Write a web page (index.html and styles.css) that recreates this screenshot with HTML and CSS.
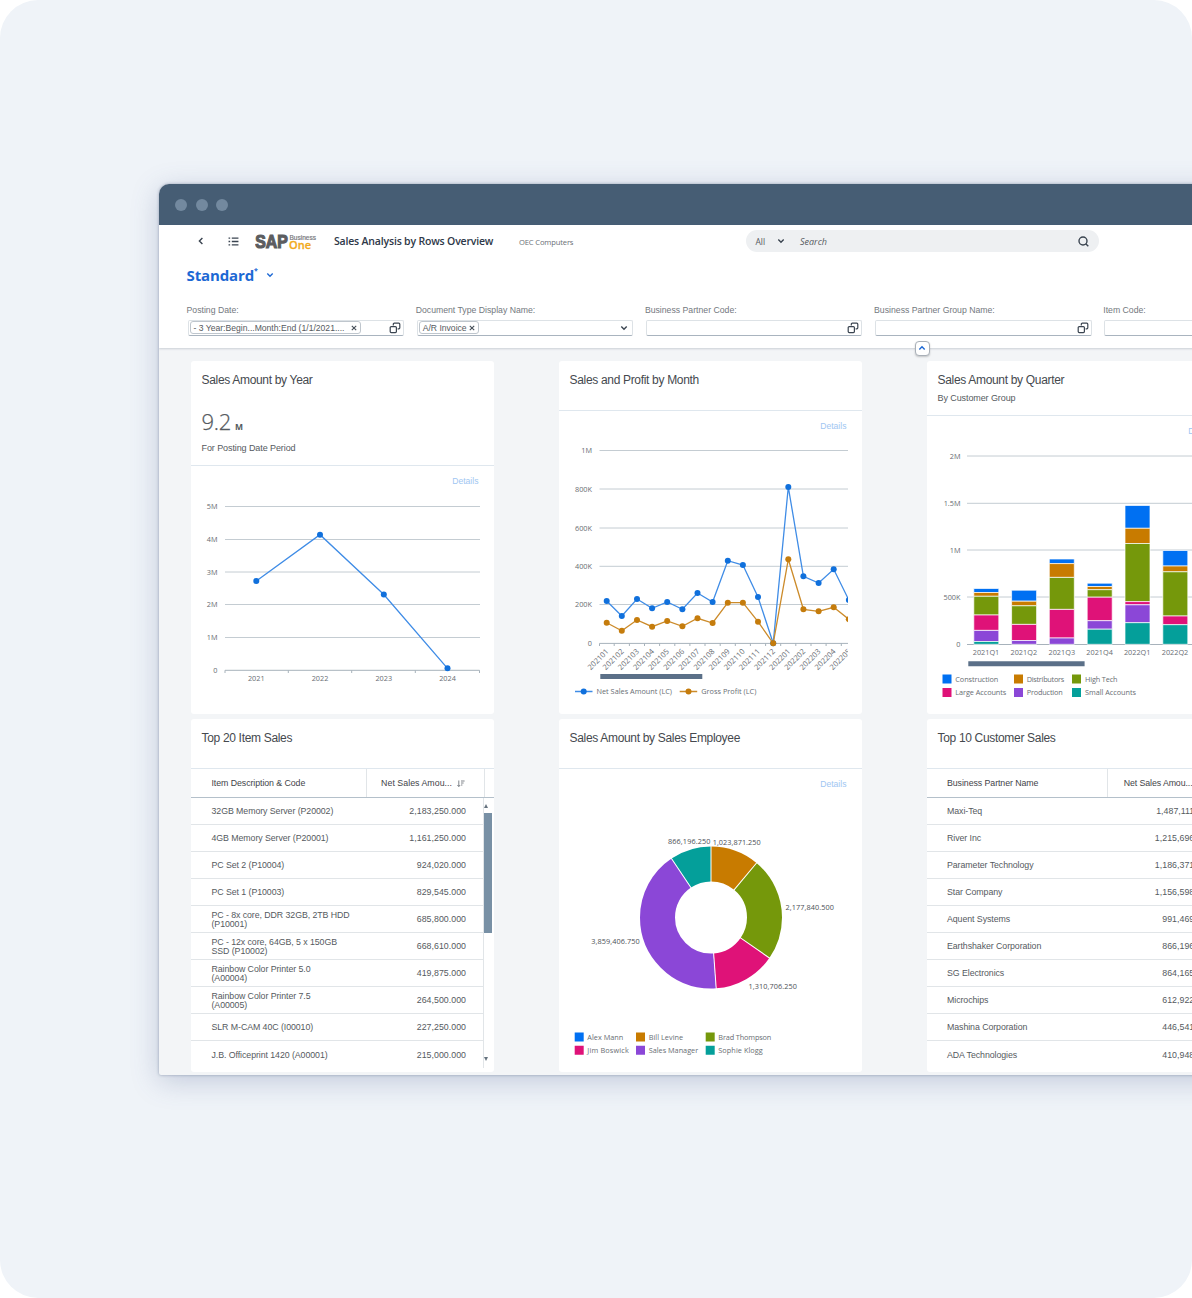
FILE: index.html
```html
<!DOCTYPE html>
<html lang="en">
<head>
<meta charset="utf-8">
<title>Sales Analysis by Rows Overview</title>
<link rel="stylesheet" href="styles.css">
</head>
<body>
<svg width="0" height="0" class="defs">
  <symbol id="value-help" viewBox="0 0 12 12"><path d="M4.3 3.6V2.2a1 1 0 0 1 1-1h4.5a1 1 0 0 1 1 1v3.6a1 1 0 0 1-1 1H8.6M2.2 4.6h4.2a1 1 0 0 1 1 1v4a1 1 0 0 1-1 1H2.2a1 1 0 0 1-1-1v-4a1 1 0 0 1 1-1z"/></symbol>
  <symbol id="chevron" viewBox="0 0 8 6"><path d="M1.3 1.5 4 4.2l2.7-2.7"/></symbol>
</svg>
<div class="stage">
<main class="window">
  <div class="titlebar"><i></i><i></i><i></i></div>
  <header class="header">
    <div class="shell">
      <svg class="icon back" viewBox="0 0 6 8"><path d="M4.4 1 1.4 4l3 3"/></svg>
      <svg class="icon menu" viewBox="0 0 11 10"><path d="M0 1.2h1.8M0 5h1.8M0 8.8h1.8M3.6 1.2H11M3.6 5H11M3.6 8.8H11"/></svg>
      <svg class="logo" viewBox="255 231 62 20">
        <text class="sap" x="255.3" y="248.3" textLength="32.5" lengthAdjust="spacingAndGlyphs">SAP</text>
        <text class="business" x="289.5" y="239.8" textLength="26.5" lengthAdjust="spacingAndGlyphs">Business</text>
        <text class="one" x="289" y="248.6" textLength="22" lengthAdjust="spacingAndGlyphs">One</text>
      </svg>
      <h1>Sales Analysis by Rows Overview</h1>
      <span class="company">OEC Computers</span>
      <div class="search">
        <span class="scope">All</span>
        <svg class="icon chev" ><use href="#chevron"/></svg>
        <span class="placeholder">Search</span>
        <svg class="icon lens" viewBox="0 0 11 11"><circle cx="5" cy="5" r="4"/><path d="m7.7 7.7 2.6 2.6"/></svg>
      </div>
    </div>
    <div class="variant"><span>Standard</span><sup>*</sup><svg class="icon chev"><use href="#chevron"/></svg></div>
    <div class="filters">
      <div class="filter"><label>Posting Date:</label><div class="input"><span class="token long"><b>- 3 Year:Begin...Month:End (1/1/2021....</b><svg class="x" viewBox="0 0 6 6"><path d="m.8.8 4.4 4.4m0-4.4L.8 5.2"/></svg></span><svg class="icon help"><use href="#value-help"/></svg></div></div>
      <div class="filter"><label>Document Type Display Name:</label><div class="input"><span class="token"><b>A/R Invoice</b><svg class="x" viewBox="0 0 6 6"><path d="m.8.8 4.4 4.4m0-4.4L.8 5.2"/></svg></span><svg class="icon chev"><use href="#chevron"/></svg></div></div>
      <div class="filter"><label>Business Partner Code:</label><div class="input"><svg class="icon help"><use href="#value-help"/></svg></div></div>
      <div class="filter"><label>Business Partner Group Name:</label><div class="input"><svg class="icon help"><use href="#value-help"/></svg></div></div>
      <div class="filter"><label>Item Code:</label><div class="input"></div></div>
    </div>
    <div class="collapse"><svg class="icon"><use href="#chevron"/></svg></div>
  </header>

  <div class="cards">
    <section class="card">
      <div class="head kpi"><h2>Sales Amount by Year</h2><div class="number">9.2<small>M</small></div><p>For Posting Date Period</p></div>
      <a class="details">Details</a>
      <svg class="chart" width="303" height="217" viewBox="191 496 303 217">
        <path class="grid" d="M225 506.5h255M225 539.5h255M225 572h255M225 604.5h255M225 637.5h255"/>
        <path class="axis" d="M225 673v-2.7h254.5v2.7M288.3 670.3v2.7M351.7 670.3v2.7M415.3 670.3v2.7"/>
        <g class="end"><text x="217.5" y="509">5M</text><text x="217.5" y="542">4M</text><text x="217.5" y="575">3M</text><text x="217.5" y="607">2M</text><text x="217.5" y="640">1M</text><text x="217.5" y="673">0</text></g>
        <g class="mid"><text x="256.3" y="681">2021</text><text x="320" y="681">2022</text><text x="383.8" y="681">2023</text><text x="447.5" y="681">2024</text></g>
        <polyline class="line blue" points="256.3,581 320,534.7 383.8,594.5 447.5,668.3"/>
        <g class="dots blue"><circle cx="256.3" cy="581" r="3"/><circle cx="320" cy="534.7" r="3"/><circle cx="383.8" cy="594.5" r="3"/><circle cx="447.5" cy="668.3" r="3"/></g>
      </svg>
    </section>

    <section class="card">
      <div class="head"><h2>Sales and Profit by Month</h2></div>
      <a class="details">Details</a>
      <svg class="chart" width="303" height="272" viewBox="559 441 303 272">
        <defs><clipPath id="plot"><path d="M570 441h278v240H570z"/></clipPath></defs>
        <path class="grid" d="M599.5 450.5H848M599.5 489H848M599.5 528H848M599.5 566.3H848M599.5 604.5H848"/>
        <path class="axis" d="M599.5 646v-2.6H848M614.2 643.4v2.6M629.4 643.4v2.6M644.5 643.4v2.6M659.6 643.4v2.6M674.8 643.4v2.6M689.9 643.4v2.6M705 643.4v2.6M720.2 643.4v2.6M735.3 643.4v2.6M750.4 643.4v2.6M765.6 643.4v2.6M780.7 643.4v2.6M795.8 643.4v2.6M811 643.4v2.6M826.1 643.4v2.6M841.3 643.4v2.6"/>
        <g class="end"><text x="592" y="453">1M</text><text x="592" y="491.6">800K</text><text x="592" y="530.5">600K</text><text x="592" y="569">400K</text><text x="592" y="607">200K</text><text x="592" y="646">0</text></g>
        <g clip-path="url(#plot)">
          <g class="end slant">
            <text transform="translate(609.2 652) rotate(-45)">202101</text><text transform="translate(624.3 652) rotate(-45)">202102</text><text transform="translate(639.5 652) rotate(-45)">202103</text><text transform="translate(654.6 652) rotate(-45)">202104</text><text transform="translate(669.7 652) rotate(-45)">202105</text><text transform="translate(684.9 652) rotate(-45)">202106</text><text transform="translate(700 652) rotate(-45)">202107</text><text transform="translate(715.1 652) rotate(-45)">202108</text><text transform="translate(730.3 652) rotate(-45)">202109</text><text transform="translate(745.4 652) rotate(-45)">202110</text><text transform="translate(760.5 652) rotate(-45)">202111</text><text transform="translate(775.7 652) rotate(-45)">202112</text><text transform="translate(790.8 652) rotate(-45)">202201</text><text transform="translate(805.9 652) rotate(-45)">202202</text><text transform="translate(821.1 652) rotate(-45)">202203</text><text transform="translate(836.2 652) rotate(-45)">202204</text><text transform="translate(851.3 652) rotate(-45)">202205</text>
          </g>
          <polyline class="line blue" points="606.7,601 621.8,616 637,599 652.1,608.3 667.2,602 682.4,609.3 697.5,593 712.6,602 727.8,560.7 742.9,565 758,597 773.2,643.3 788.3,487 803.4,576.3 818.6,583 833.7,569.3 848.8,600"/>
          <g class="dots blue"><circle cx="606.7" cy="601" r="3"/><circle cx="621.8" cy="616" r="3"/><circle cx="637" cy="599" r="3"/><circle cx="652.1" cy="608.3" r="3"/><circle cx="667.2" cy="602" r="3"/><circle cx="682.4" cy="609.3" r="3"/><circle cx="697.5" cy="593" r="3"/><circle cx="712.6" cy="602" r="3"/><circle cx="727.8" cy="560.7" r="3"/><circle cx="742.9" cy="565" r="3"/><circle cx="758" cy="597" r="3"/><circle cx="773.2" cy="643.3" r="3"/><circle cx="788.3" cy="487" r="3"/><circle cx="803.4" cy="576.3" r="3"/><circle cx="818.6" cy="583" r="3"/><circle cx="833.7" cy="569.3" r="3"/><circle cx="848.8" cy="600" r="3"/></g>
          <polyline class="line gold" points="606.7,622.7 621.8,630.7 637,620 652.1,626.7 667.2,621 682.4,626.3 697.5,618.3 712.6,623 727.8,602.7 742.9,602.7 758,621.7 773.2,643.3 788.3,559.3 803.4,609.3 818.6,611.3 833.7,607.3 848.8,619.3"/>
          <g class="dots gold"><circle cx="606.7" cy="622.7" r="3"/><circle cx="621.8" cy="630.7" r="3"/><circle cx="637" cy="620" r="3"/><circle cx="652.1" cy="626.7" r="3"/><circle cx="667.2" cy="621" r="3"/><circle cx="682.4" cy="626.3" r="3"/><circle cx="697.5" cy="618.3" r="3"/><circle cx="712.6" cy="623" r="3"/><circle cx="727.8" cy="602.7" r="3"/><circle cx="742.9" cy="602.7" r="3"/><circle cx="758" cy="621.7" r="3"/><circle cx="773.2" cy="643.3" r="3"/><circle cx="788.3" cy="559.3" r="3"/><circle cx="803.4" cy="609.3" r="3"/><circle cx="818.6" cy="611.3" r="3"/><circle cx="833.7" cy="607.3" r="3"/><circle cx="848.8" cy="619.3" r="3"/></g>
        </g>
        <path class="scroll" d="M600.3 674h102v5h-102z"/>
        <path class="line blue" d="M575 691.5h17.5"/><g class="dots blue"><circle cx="583.7" cy="691.5" r="3"/></g>
        <text x="596.5" y="694.3" textLength="75.5">Net Sales Amount (LC)</text>
        <path class="line gold" d="M679.7 691.5h17.5"/><g class="dots gold"><circle cx="688.5" cy="691.5" r="3"/></g>
        <text x="701.3" y="694.3" textLength="55">Gross Profit (LC)</text>
      </svg>
    </section>

    <section class="card">
      <div class="head sub"><h2>Sales Amount by Quarter</h2><p>By Customer Group</p></div>
      <a class="details">Details</a>
      <svg class="chart" width="303" height="267" viewBox="927 446 303 267">
        <path class="grid" d="M967 456h249M967 503.3h249M967 550h249M967 597h249"/>
        <path class="axis" d="M967 644.5h249"/>
        <g class="end"><text x="960.5" y="458.5">2M</text><text x="960.5" y="506">1.5M</text><text x="960.5" y="553">1M</text><text x="960.5" y="599.5">500K</text><text x="960.5" y="647">0</text></g>
        <g class="bars">
          <path class="c1" d="M973.8 588.5h25v4h-25zM1011.6 590.2h25v11h-25zM1049.3 559h25v4.6h-25zM1087.2 583.2h25v3.3h-25zM1125 505.5h25v22.8h-25zM1162.8 550.5h25v15.5h-25z"/>
          <path class="c2" d="M973.8 592.5h25v3.8h-25zM1011.6 601.2h25v4.6h-25zM1049.3 563.6h25v13.8h-25zM1087.2 586.5h25v3.2h-25zM1125 528.3h25v15.2h-25zM1162.8 566h25v5.8h-25z"/>
          <path class="c3" d="M973.8 596.3h25v18.7h-25zM1011.6 605.8h25v18.6h-25zM1049.3 577.4h25v32h-25zM1087.2 589.7h25v7.5h-25zM1125 543.5h25v58.1h-25zM1162.8 571.8h25v44.2h-25z"/>
          <path class="c4" d="M973.8 615h25v15.4h-25zM1011.6 624.4h25v16.1h-25zM1049.3 609.4h25v28.6h-25zM1087.2 597.2h25v23.5h-25zM1125 601.6h25v3.2h-25zM1162.8 616h25v8.7h-25z"/>
          <path class="c5" d="M973.8 630.4h25v11.1h-25zM1011.6 640.5h25v3.8h-25zM1049.3 638h25v6.3h-25zM1087.2 620.7h25v8.5h-25zM1125 604.8h25v17.9h-25z"/>
          <path class="c6" d="M973.8 641.5h25v2.8h-25zM1087.2 629.2h25v15.1h-25zM1125 622.7h25v21.6h-25zM1162.8 624.7h25v19.6h-25z"/>
        </g>
        <g class="mid"><text x="986" y="655.2">2021Q1</text><text x="1023.8" y="655.2">2021Q2</text><text x="1061.8" y="655.2">2021Q3</text><text x="1099.6" y="655.2">2021Q4</text><text x="1137.2" y="655.2">2022Q1</text><text x="1175" y="655.2">2022Q2</text></g>
        <path class="scroll" d="M968.3 661.3h116.3v5H968.3z"/>
        <path class="c1" d="M942.5 674.5h9v9h-9z"/><path class="c2" d="M1014 674.5h9v9h-9z"/><path class="c3" d="M1072 674.5h9v9h-9z"/>
        <path class="c4" d="M942.5 688h9v9h-9z"/><path class="c5" d="M1014 688h9v9h-9z"/><path class="c6" d="M1072 688h9v9h-9z"/>
        <text x="955.3" y="682" textLength="43">Construction</text><text x="1026.7" y="682" textLength="37.5">Distributors</text><text x="1085" y="682" textLength="32.5">High Tech</text>
        <text x="955.3" y="695.3" textLength="51">Large Accounts</text><text x="1026.7" y="695.3" textLength="36">Production</text><text x="1085" y="695.3" textLength="51">Small Accounts</text>
      </svg>
    </section>

    <section class="card">
      <div class="head"><h2>Top 20 Item Sales</h2></div>
      <div class="table items">
        <div class="row th"><span>Item Description &amp; Code</span><span class="num">Net Sales Amou...<svg class="sort" viewBox="0 0 8 8"><path d="M1.8.5v6M.4 5l1.4 1.5L3.2 5M4 1h3.6M4 3h2.6M4 5h1.4"/></svg></span><span></span></div>
        <div class="body">
          <div class="rows">
            <div class="row"><span>32GB Memory Server (P20002)</span><span class="num">2,183,250.000</span></div>
            <div class="row"><span>4GB Memory Server (P20001)</span><span class="num">1,161,250.000</span></div>
            <div class="row"><span>PC Set 2 (P10004)</span><span class="num">924,020.000</span></div>
            <div class="row"><span>PC Set 1 (P10003)</span><span class="num">829,545.000</span></div>
            <div class="row"><span>PC - 8x core, DDR 32GB, 2TB HDD<br>(P10001)</span><span class="num">685,800.000</span></div>
            <div class="row"><span>PC - 12x core, 64GB, 5 x 150GB<br>SSD (P10002)</span><span class="num">668,610.000</span></div>
            <div class="row"><span>Rainbow Color Printer 5.0<br>(A00004)</span><span class="num">419,875.000</span></div>
            <div class="row"><span>Rainbow Color Printer 7.5<br>(A00005)</span><span class="num">264,500.000</span></div>
            <div class="row"><span>SLR M-CAM 40C (I00010)</span><span class="num">227,250.000</span></div>
            <div class="row"><span>J.B. Officeprint 1420 (A00001)</span><span class="num">215,000.000</span></div>
          </div>
          <div class="scrollbar"><i class="up"></i><i class="thumb"></i><i class="down"></i></div>
        </div>
      </div>
    </section>

    <section class="card">
      <div class="head"><h2>Sales Amount by Sales Employee</h2></div>
      <a class="details">Details</a>
      <svg class="chart" width="303" height="273" viewBox="559 799 303 273">
        <g class="donut" transform="translate(711 917.5) rotate(-90)">
          <circle class="s2" r="53.5" pathLength="100" stroke-dasharray="11.08 100"/>
          <circle class="s3" r="53.5" pathLength="100" stroke-dasharray="23.57 100" stroke-dashoffset="-11.08"/>
          <circle class="s4" r="53.5" pathLength="100" stroke-dasharray="14.19 100" stroke-dashoffset="-34.65"/>
          <circle class="s5" r="53.5" pathLength="100" stroke-dasharray="41.78 100" stroke-dashoffset="-48.84"/>
          <circle class="s6" r="53.5" pathLength="100" stroke-dasharray="9.38 100" stroke-dashoffset="-90.62"/>
          <path class="gap" d="M35 0h37"/><path class="gap" d="M35 0h37" transform="rotate(39.9)"/><path class="gap" d="M35 0h37" transform="rotate(124.7)"/><path class="gap" d="M35 0h37" transform="rotate(175.8)"/><path class="gap" d="M35 0h37" transform="rotate(326.2)"/>
        </g>
        <g class="values"><text x="668" y="843.7" textLength="42.5">866,196.250</text><text x="712.7" y="845.2" textLength="48">1,023,871.250</text><text x="785.5" y="910" textLength="48.5">2,177,840.500</text><text x="591.3" y="943.7" textLength="48.5">3,859,406.750</text><text x="748.5" y="989.3" textLength="48.5">1,310,706.250</text></g>
        <path class="c1" d="M574.7 1032.5h9v9h-9z"/><path class="c2" d="M636 1032.5h9v9h-9z"/><path class="c3" d="M705.7 1032.5h9v9h-9z"/>
        <path class="c4" d="M574.7 1045.7h9v9h-9z"/><path class="c5" d="M636 1045.7h9v9h-9z"/><path class="c6" d="M705.7 1045.7h9v9h-9z"/>
        <text x="587.3" y="1039.5" textLength="36">Alex Mann</text><text x="648.7" y="1039.5" textLength="34.5">Bill Levine</text><text x="718.3" y="1039.5" textLength="53">Brad Thompson</text>
        <text x="587.3" y="1052.8" textLength="41.5">Jim Boswick</text><text x="648.7" y="1052.8" textLength="49.5">Sales Manager</text><text x="718.3" y="1052.8" textLength="44.5">Sophie Klogg</text>
      </svg>
    </section>

    <section class="card">
      <div class="head"><h2>Top 10 Customer Sales</h2></div>
      <div class="table customers">
        <div class="row th"><span>Business Partner Name</span><span class="num">Net Sales Amou...</span></div>
        <div class="row"><span>Maxi-Teq</span><span class="num">1,487,111.750</span></div>
        <div class="row"><span>River Inc</span><span class="num">1,215,696.500</span></div>
        <div class="row"><span>Parameter Technology</span><span class="num">1,186,371.250</span></div>
        <div class="row"><span>Star Company</span><span class="num">1,156,598.000</span></div>
        <div class="row"><span>Aquent Systems</span><span class="num">991,469.500</span></div>
        <div class="row"><span>Earthshaker Corporation</span><span class="num">866,196.250</span></div>
        <div class="row"><span>SG Electronics</span><span class="num">864,165.000</span></div>
        <div class="row"><span>Microchips</span><span class="num">612,922.500</span></div>
        <div class="row"><span>Mashina Corporation</span><span class="num">446,541.250</span></div>
        <div class="row"><span>ADA Technologies</span><span class="num">410,948.000</span></div>
      </div>
    </section>
  </div>
</main>
</div>
</body>
</html>
```
FILE: styles.css
```css
* { box-sizing: border-box; }
body { margin: 0; background: #fff; font-family: "Liberation Sans", Arial, sans-serif; color: #555a60; }
h1, h2, p { margin: 0; font-weight: 400; }
svg { display: block; }
.defs { position: absolute; }

.stage { width: 1192px; height: 1298px; padding: 184px 0 0 159px; border-radius: 38px; background: #eff3f8; overflow: hidden; }
.window { width: 1120px; height: 891px; border-radius: 10px 0 0 2px; background: #f3f5f7; overflow: hidden; box-shadow: 0 0 3px rgba(60, 75, 110, .45), 0 6px 28px rgba(70, 90, 140, .27); }

.titlebar { display: flex; gap: 8.5px; align-items: center; height: 41px; padding-left: 16px; background: #465d74; }
.titlebar i { width: 12px; height: 12px; border-radius: 50%; background: #73899f; }

.header { position: relative; height: 123px; background: #fff; box-shadow: 0 1px 2px rgba(80, 95, 110, .25); white-space: nowrap; }
.icon { fill: none; stroke: #3a4450; stroke-width: 1.4; }
.shell { display: flex; align-items: center; height: 32px; padding-left: 39px; }
.back { width: 6px; height: 8px; margin-right: 24px; }
.menu { width: 11px; height: 9px; margin-right: 16px; }
.logo { width: 62px; height: 20px; margin-right: 17px; }
.sap { font: 700 18.5px "Liberation Sans", sans-serif; fill: #5c5d60; stroke: #5c5d60; stroke-width: 1.2; }
.business { font: 6.8px "Liberation Sans", sans-serif; fill: #77787c; stroke: #77787c; stroke-width: .2; }
.one { font: 600 11px "Open Sans", sans-serif; fill: #f2ab1c; stroke: #f2ab1c; stroke-width: .3; }
h1 { width: 185px; font: 600 10.5px "Open Sans", sans-serif; letter-spacing: -.18px; color: #2e3848; }
.company { width: 226.5px; margin-top: 2px; font: 7.6px "Open Sans", sans-serif; letter-spacing: -.15px; color: #6a6f76; }
.search { display: flex; align-items: center; width: 353px; height: 22px; padding: 0 10px 0 10px; border-radius: 11px; background: #eef0f2; font: 8.5px "Open Sans", sans-serif; }
.scope { width: 21.5px; }
.chev { width: 8px; height: 6px; }
.search .placeholder { margin-left: 15px; font-style: italic; font-size: 9px; }
.lens { width: 11px; height: 11px; margin-left: auto; }

.variant { display: flex; align-items: center; height: 36px; padding-left: 27.5px; color: #1c68d4; font: 700 15px "Open Sans", sans-serif; letter-spacing: -.12px; }
.variant sup { width: 5px; margin-top: -8px; font-size: 7px; line-height: 8px; }
.variant .icon { margin-left: 7px; stroke: #1c68d4; }

.filters { display: flex; gap: 13px; padding: 10.5px 0 0 27.5px; }
.filter { width: 216.2px; flex: none; }
.filter label { display: block; height: 16px; font-size: 8.7px; line-height: 13px; color: #73787e; }
.input { display: flex; align-items: center; width: 216.5px; height: 16px; margin-left: 1px; padding: 0 2px; border: 1px solid #dde2e6; border-bottom: 1.5px solid #a9b4bf; border-radius: 2px; }
.input > .icon { margin-left: auto; }
.input > .chev { margin-right: 2px; }
.help { width: 12px; height: 12px; stroke-width: 1.2; }
.token { display: flex; align-items: center; justify-content: space-between; width: 60px; height: 12.5px; margin-left: -1px; padding: 0 3px; border: 1px solid #bfc6cd; border-radius: 3px; font-size: 8.6px; }
.token.long { width: 171px; }
.token b { font-weight: 400; }
.x { width: 6px; height: 6px; stroke: #444d57; stroke-width: 1.1; }
.collapse { position: absolute; left: 755.5px; top: 115.5px; display: grid; place-items: center; width: 15px; height: 15px; border: 1px solid #a9b0b8; border-radius: 4px; background: #fff; box-shadow: 0 1px 2px rgba(0, 0, 0, .2); }
.collapse .icon { width: 8px; height: 6px; transform: rotate(180deg); stroke: #1c68d4; }

.cards { display: grid; grid-template-columns: repeat(3, 303px); grid-template-rows: 353px 353px; column-gap: 65px; row-gap: 5px; padding: 13px 0 0 32px; }
.card { display: flex; flex-direction: column; border-radius: 3px; background: #fff; overflow: hidden; white-space: nowrap; }
.head { height: 50px; flex: none; padding: 11px 10.5px 0; border-bottom: 1px solid #dfe7ee; }
.head.kpi { height: 105px; }
.head.sub { height: 55px; }
.head h2 { font-size: 12px; line-height: 16px; letter-spacing: -.32px; color: #45494e; }
.head p { font-size: 9px; line-height: 12px; letter-spacing: -.09px; }
.head.sub p { margin-top: 4px; }
.number { height: 30px; margin: 16px 0 8px; font: 300 22px/34px "Open Sans", sans-serif; letter-spacing: -.3px; -webkit-text-stroke: .25px #555a60; }
.number small { margin-left: 4px; font: 700 8.5px "Open Sans", sans-serif; -webkit-text-stroke: 0; }
.details { height: 30px; flex: none; padding-right: 15.5px; text-align: right; font-size: 8.6px; line-height: 31px; color: #a0c6f2; }

.chart { flex: none; }
.chart text { font: 7.3px "Open Sans", sans-serif; fill: #686d73; }
.chart .values text { fill: #4c5056; }
.end text { text-anchor: end; }
.slant text { font-size: 7.6px; }
.mid text { text-anchor: middle; }
.grid { stroke: #c4ccd2; fill: none; }
.axis { stroke: #a7b2bb; fill: none; }
.line { fill: none; stroke-width: 1.3; }
.line.blue { stroke: #3f8ce6; }
.line.gold { stroke: #cc8b2a; }
.dots.blue { fill: #1070dc; }
.dots.gold { fill: #c57c0c; }
.scroll { fill: #5b7088; }
.bars path { stroke: #fff; stroke-width: .7; }
.c1 { fill: #0070f2; }
.c2 { fill: #c87b00; }
.c3 { fill: #75980b; }
.c4 { fill: #df1278; }
.c5 { fill: #8b47d7; }
.c6 { fill: #049f9a; }
.donut circle { fill: none; stroke-width: 35; }
.s2 { stroke: #c87b00; }
.s3 { stroke: #75980b; }
.s4 { stroke: #df1278; }
.s5 { stroke: #8b47d7; }
.s6 { stroke: #049f9a; }
.gap { stroke: #fff; stroke-width: 1; }

.table { font-size: 8.8px; line-height: 9.3px; }
.row { display: grid; align-items: center; height: 27px; padding: 2px 0 0 20.5px; border-bottom: 1px solid #e1e5e8; letter-spacing: -.07px; }
.row .num { text-align: right; letter-spacing: .03px; }
.items .row { grid-template-columns: 154.5px 100px 1fr; }
.row:last-child { border-bottom: 0; }
.row.th { height: 29px; padding-top: 0; border-bottom: 1px solid #b4c0ca; color: #3f4449; }
.th > span { display: flex; align-items: center; justify-content: flex-end; height: 28px; padding-top: 1px; }
.th > span:first-child { justify-content: flex-start; border-right: 1px solid #e1e5e8; }
.items .th { grid-template-columns: 155.5px 118px 1fr; }
.items .th .num { padding-right: 19px; border-right: 1px solid #e1e5e8; }
.sort { width: 8px; height: 8px; margin-left: 5px; fill: none; stroke: #5f666d; stroke-width: .8; }
.body { display: flex; }
.rows { width: 293px; border-right: 1px solid #e1e5e8; }
.scrollbar { display: flex; flex-direction: column; width: 8px; }
.scrollbar i { display: block; }
.scrollbar .up, .scrollbar .down { margin: 6px 0 5px; width: 0; border: 2.5px solid transparent; border-top: 0; border-bottom: 4px solid #66737f; }
.scrollbar .thumb { width: 8px; height: 120px; background: #7890a5; }
.scrollbar .down { margin: 124px 0 0; border-bottom: 0; border-top: 4px solid #66737f; }
.customers .row { grid-template-columns: 161px 118px; padding-left: 20px; }
.customers .row .num { padding-right: 14.5px; }
.customers .row.th .num { padding-right: 33.5px; letter-spacing: -.1px; }
```
